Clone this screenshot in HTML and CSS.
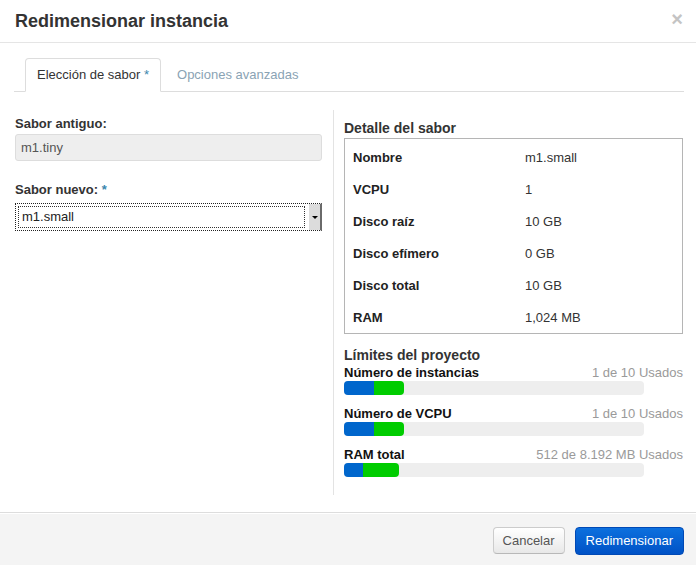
FILE: index.html
```html
<!DOCTYPE html>
<html lang="es">
<head>
<meta charset="utf-8">
<title>Redimensionar instancia</title>
<link rel="stylesheet" href="styles.css">
</head>
<body>
<div class="modal">
  <div class="modal-header">
    <h3 class="modal-title">Redimensionar instancia</h3>
    <span class="close">×</span>
  </div>
  <div class="modal-body">
    <ul class="tabs">
      <li class="tab active">Elección de sabor <span class="req">*</span></li>
      <li class="tab">Opciones avanzadas</li>
    </ul>
    <div class="panes">
      <div class="left">
        <label class="field-label first">Sabor antiguo:</label>
        <div class="input readonly">m1.tiny</div>
        <label class="field-label second">Sabor nuevo: <span class="req">*</span></label>
        <div class="select">
          <span class="select-value">m1.small</span>
          <span class="select-arrow"><span class="tri"></span></span>
        </div>
      </div>
      <div class="right">
        <h4 class="section-title">Detalle del sabor</h4>
        <div class="detail-box">
          <div class="row"><span class="k">Nombre</span><span class="v">m1.small</span></div>
          <div class="row"><span class="k">VCPU</span><span class="v">1</span></div>
          <div class="row"><span class="k">Disco raíz</span><span class="v">10 GB</span></div>
          <div class="row"><span class="k">Disco efímero</span><span class="v">0 GB</span></div>
          <div class="row"><span class="k">Disco total</span><span class="v">10 GB</span></div>
          <div class="row"><span class="k">RAM</span><span class="v">1,024 MB</span></div>
        </div>
        <h4 class="section-title limits-title">Límites del proyecto</h4>
        <div class="quota">
          <div class="quota-head"><strong>Número de instancias</strong><span class="used">1 de 10 Usados</span></div>
          <div class="bar"><span class="seg blue" style="width:30px"></span><span class="seg green" style="width:30px"></span></div>
        </div>
        <div class="quota">
          <div class="quota-head"><strong>Número de VCPU</strong><span class="used">1 de 10 Usados</span></div>
          <div class="bar"><span class="seg blue" style="width:30px"></span><span class="seg green" style="width:30px"></span></div>
        </div>
        <div class="quota">
          <div class="quota-head"><strong>RAM total</strong><span class="used">512 de 8.192 MB Usados</span></div>
          <div class="bar"><span class="seg blue" style="width:19px"></span><span class="seg green" style="width:36px"></span></div>
        </div>
      </div>
    </div>
  </div>
  <div class="modal-footer">
    <button class="btn btn-default">Cancelar</button>
    <button class="btn btn-primary">Redimensionar</button>
  </div>
</div>
</body>
</html>
```

FILE: styles.css
```css
html, body {
  margin: 0;
  padding: 0;
  background: #fff;
}

body {
  font-family: "Liberation Sans", Arial, sans-serif;
  font-size: 13px;
  color: #333;
  width: 696px;
  height: 565px;
  overflow: hidden;
}

.modal {
  display: flex;
  flex-direction: column;
  height: 565px;
}

.modal-header {
  height: 42px;
  border-bottom: 1px solid #e5e5e5;
  display: flex;
  align-items: center;
  justify-content: space-between;
  padding: 0 13px 0 15px;
}

.modal-title {
  margin: 0;
  font-size: 18px;
  font-weight: bold;
  line-height: 20px;
  color: #333;
  padding-bottom: 0;
}

.close {
  font-size: 20px;
  font-weight: bold;
  line-height: 20px;
  color: #c4c4c4;
  padding-bottom: 4px;
}

.modal-body {
  flex: 1;
  padding-top: 15px;
}

.tabs {
  list-style: none;
  margin: 0 12px 0 14px;
  padding: 0 0 0 11px;
  display: flex;
  border-bottom: 1px solid #ddd;
}

.tab {
  margin-bottom: -1px;
  margin-right: 4px;
  padding: 0 11px;
  line-height: 32px;
  border: 1px solid transparent;
  border-radius: 4px 4px 0 0;
  color: #8aa3b4;
}

.tab.active {
  color: #333;
  background: #fff;
  border-color: #ddd #ddd transparent;
}

.req {
  color: #3a87ad;
}

.panes {
  display: flex;
  margin-top: 18px;
  padding: 0 13px 0 15px;
  height: 385px;
}

.left {
  width: 307px;
  margin-right: 11px;
}

.field-label {
  display: block;
  font-weight: bold;
  line-height: 18px;
  color: #333;
}

.field-label.first {
  margin-top: 5px;
  margin-bottom: 1px;
}

.field-label.second {
  margin-top: 20px;
  margin-bottom: 4px;
}

.input {
  box-sizing: border-box;
  height: 27px;
  line-height: 25px;
  padding: 0 5px;
  border: 1px solid #ddd;
  border-radius: 3px;
  color: #555;
}

.input.readonly {
  background: #eee;
}

.select {
  box-sizing: border-box;
  height: 28px;
  display: flex;
  padding: 2px 0 2px 2px;
  border: 1px dotted #222;
  border-right: 2px solid #6a6a6a;
  background: #fff;
}

.select-value {
  flex: 1;
  border: 1px dotted #333;
  padding-left: 3px;
  line-height: 20px;
  color: #222;
}

.select-arrow {
  width: 11px;
  margin-left: 4px;
  margin-top: -2px;
  margin-bottom: -2px;
  background: #dcdcdc;
  display: flex;
  align-items: center;
  justify-content: center;
}

.tri {
  width: 0;
  height: 0;
  border-left: 3px solid transparent;
  border-right: 3px solid transparent;
  border-top: 3px solid #000;
}

.right {
  flex: 1;
  border-left: 1px solid #e3e3e3;
  padding-left: 10px;
}

.section-title {
  margin: 9px 0 1px;
  font-size: 14px;
  font-weight: bold;
  line-height: 18px;
  color: #333;
}

.detail-box {
  border: 1px solid #b5b5b5;
  padding-top: 2px;
}

.row {
  display: flex;
  height: 32px;
  align-items: center;
  padding-left: 8px;
}

.row .k {
  width: 172px;
  font-weight: bold;
  color: #222;
}

.row .v {
  color: #333;
}

.limits-title {
  margin-top: 12px;
  margin-bottom: 1px;
}

.quota {
  margin-bottom: 11px;
}

.quota-head {
  display: flex;
  justify-content: space-between;
  line-height: 16px;
}

.quota-head strong {
  color: #111;
}

.used {
  color: #9a9a9a;
}

.bar {
  width: 300px;
  height: 14px;
  background: #eee;
  border-radius: 4px;
  display: flex;
}

.seg {
  height: 14px;
}

.seg.blue {
  background: #0066cc;
  border-radius: 4px 0 0 4px;
}

.seg.green {
  background: #00cc00;
  border-radius: 0 4px 4px 0;
}

.modal-footer {
  height: 53px;
  border-top: 1px solid #ddd;
  box-shadow: inset 0 1px 0 #fff;
  background: #f4f4f4;
  display: flex;
  justify-content: flex-end;
  align-items: flex-start;
  padding: 14px 12px 0 0;
  box-sizing: border-box;
  gap: 10px;
}

.btn {
  font-family: "Liberation Sans", Arial, sans-serif;
  font-size: 13px;
  height: 28px;
  line-height: 26px;
  padding: 0 10px;
  border-radius: 4px;
  margin: 0;
}

.btn-default {
  color: #555;
  background: linear-gradient(#ffffff, #e8e8e8);
  border: 1px solid #cccccc;
  border-bottom-color: #b8b8b8;
  height: 27px;
  line-height: 25px;
  padding: 0 9px;
}

.btn-primary {
  color: #fff;
  background: linear-gradient(#0c70de, #0052c6);
  border: 1px solid #0049b5;
}
```
